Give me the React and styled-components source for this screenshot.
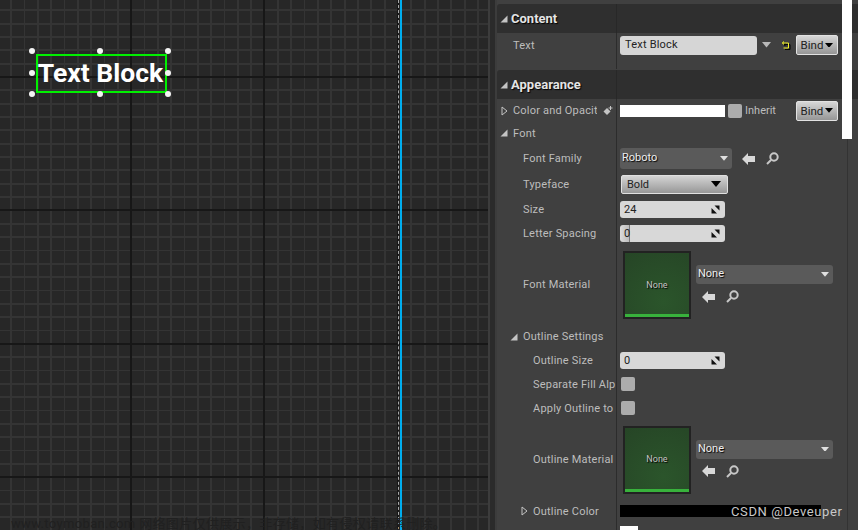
import React from "react";
import styled, { createGlobalStyle } from "styled-components";

const GlobalStyle = createGlobalStyle`
    html, body { margin: 0; padding: 0; background: #404040; }
    body { font-family: Roboto, "Noto Sans CJK SC", sans-serif; }
`;

const Page = styled.div`
    position: relative;
    display: flex;
    width: 858px;
    height: 530px;
    overflow: hidden;
`;

const Canvas = styled.div`
    position: relative;
    flex: 0 0 488px;
    background-color: #272727;
    background-image:
        repeating-linear-gradient(90deg, transparent 0, transparent 130px, #171717 130px, #171717 132px, transparent 132px, transparent 133.4px),
        repeating-linear-gradient(180deg, transparent 0, transparent 76px, #171717 76px, #171717 78px, transparent 78px, transparent 133.4px),
        repeating-linear-gradient(90deg, transparent 0, transparent 10.2px, #343434 10.2px, #343434 12px, transparent 12px, transparent 13.34px),
        repeating-linear-gradient(180deg, transparent 0, transparent 9.4px, #343434 9.4px, #343434 11.2px, transparent 11.2px, transparent 13.34px);
`;

const Selection = styled.div`
    position: absolute;
    left: 36px;
    top: 54px;
    width: 125px;
    height: 33px;
    padding: 0 2px 2px 0;
    border: 2px solid #00f000;
    display: flex;
    align-items: center;
    justify-content: center;
`;

const PreviewText = styled.span`
    color: #fff;
    font-size: 26.5px;
    font-weight: 700;
    white-space: nowrap;
`;

const Handle = styled.i`
    position: absolute;
    left: ${p => p.$x - 3}px;
    top: ${p => p.$y - 3}px;
    width: 6px;
    height: 6px;
    border-radius: 50%;
    background: #f4f4f4;
`;

const Guide = styled.div`
    position: absolute;
    left: 398px;
    top: 0;
    bottom: 0;
    width: 3px;
    border-left: 1px dashed #a8a8a8;
    &::after {
        content: "";
        display: block;
        width: 2px;
        height: 100%;
        margin-left: 1px;
        background: #00aeef;
    }
`;

const Gutter = styled.div`
    flex: 0 0 9px;
    box-sizing: border-box;
    background: #2b2b2b;
    border-left: 2px solid #3c3c3c;
    border-right: 2px solid #3c3c3c;
`;

const Panel = styled.div`
    flex: 1;
    padding-top: 4px;
    background: #404040;
`;

const Section = styled.div`
    padding-bottom: ${p => p.$pad || 0}px;
`;

const Header = styled.div`
    display: grid;
    grid-template-columns: 120px 1fr;
    height: 29px;
    background: #2f2f2f;
    border-radius: 3px 0 0 0;
`;

const HeaderTitle = styled.div`
    display: flex;
    align-items: center;
    gap: 3px;
    padding-left: 3px;
    border-right: 1px solid #282828;
    color: #e4e4e4;
    font-size: 13px;
    font-weight: 700;
    text-shadow: 1px 1px 1px #000;
`;

const Row = styled.div`
    display: grid;
    grid-template-columns: 120px 1fr;
    height: ${p => p.$h || 24}px;
`;

const Label = styled.div`
    display: flex;
    align-items: center;
    padding-left: ${p => p.$indent || 0}px;
    padding-bottom: ${p => p.$pb || 0}px;
    border-right: 1px solid #2c2c2c;
    color: #bdbdbd;
    font-size: 11px;
    letter-spacing: 0.2px;
    white-space: nowrap;
    overflow: hidden;
`;

const Twist = styled.span`
    flex: 0 0 ${p => p.$w || 13}px;
    display: flex;
    align-items: center;
`;

const KeySlot = styled.span`
    flex: 0 0 16px;
    display: flex;
    align-items: center;
    justify-content: flex-end;
`;

const Clip = styled.span`
    display: block;
    overflow: hidden;
    width: ${p => p.$w}px;
`;

const Value = styled.div`
    display: flex;
    align-items: center;
    padding-left: ${p => p.$left ?? 3}px;
    padding-bottom: ${p => p.$pb || 0}px;
    min-width: 0;
`;

const PeekValue = styled.div`
    padding: 3px 0 0 3px;
`;

const TextInput = styled.div`
    width: 137px;
    height: 19px;
    padding: 0 0 2px 5px;
    box-sizing: border-box;
    display: flex;
    align-items: center;
    border-radius: 3px;
    background: #d6d6d6;
    color: #222;
    font-size: 11px;
    letter-spacing: 0.2px;
`;

const NumberInput = styled.div`
    width: 105px;
    height: 17px;
    padding: 0 5px 0 4px;
    box-sizing: border-box;
    display: flex;
    align-items: center;
    justify-content: space-between;
    border-radius: 3px;
    background: ${p => p.$cursor
        ? "linear-gradient(90deg, #dcdcdc 0, #bcbcbc 9px, #777 9px, #777 10px, #d8d8d8 10px)"
        : "#d8d8d8"};
    color: #222;
    font-size: 11px;
`;

const BindButton = styled.div`
    width: 42px;
    height: 20px;
    box-sizing: border-box;
    margin-left: ${p => p.$ml}px;
    display: flex;
    align-items: center;
    justify-content: center;
    gap: 2px;
    border: 1px solid #e2e2e2;
    border-radius: 2px;
    background: linear-gradient(#d6d6d6, #969696);
    color: #222;
    font-size: 11.5px;
`;

const Swatch = styled.div`
    width: ${p => p.$w}px;
    height: 12px;
    background: ${p => p.$c};
`;

const Check = styled.div`
    flex: 0 0 14px;
    height: 14px;
    margin-left: ${p => p.$ml || 0}px;
    border-radius: 2px;
    background: #acacac;
`;

const Inherit = styled.span`
    margin-left: 3px;
    color: #bdbdbd;
    font-size: 11px;
`;

const Combo = styled.div`
    width: ${p => p.$w}px;
    height: ${p => p.$h || 19}px;
    padding: 0 4px 0 2px;
    box-sizing: border-box;
    display: flex;
    align-items: center;
    justify-content: space-between;
    border-radius: 3px;
    background: #5a5a5a;
    color: #eee;
    font-size: 11px;
    text-shadow: 1px 1px 1px #000;
    span { margin-top: -2px; }
`;

const TypefaceCombo = styled.div`
    width: 107px;
    height: 19px;
    margin-left: 1px;
    padding: 0 6px 0 5px;
    box-sizing: border-box;
    display: flex;
    align-items: center;
    justify-content: space-between;
    border: 1px solid #e0e0e0;
    border-radius: 2px;
    background: linear-gradient(#d4d4d4, #979797);
    color: #222;
    font-size: 11px;
`;

const Thumb = styled.div`
    flex: 0 0 64px;
    height: 64px;
    margin: 0 7px 0 8px;
    padding-top: 2px;
    box-sizing: border-box;
    border-bottom: 3px solid #38b23c;
    display: flex;
    align-items: center;
    justify-content: center;
    background: radial-gradient(circle at 60% 80%, #2b552b, #264526);
    box-shadow: 0 0 0 2px #222;
    color: #c4c4c4;
    font-size: 9px;
    text-shadow: 1px 1px 1px #000;
`;

const AssetStack = styled.div`
    display: flex;
    flex-direction: column;
    gap: 6px;
    padding-bottom: 2px;
`;

const ToolIcons = styled.div`
    display: flex;
    align-items: center;
    gap: ${p => p.$gap || 10}px;
    margin-left: ${p => p.$ml || 0}px;
`;

const Scrollbar = styled.div`
    position: absolute;
    left: 842px;
    top: 0;
    width: 10px;
    height: 139px;
    background: #fff;
`;

const Track = styled.div`
    position: absolute;
    left: 847px;
    top: 139px;
    bottom: 0;
    width: 1px;
    background: #333;
`;

const Credit = styled.div`
    position: absolute;
    left: 731px;
    top: 504px;
    color: #c8c8c8;
    font-size: 13px;
    letter-spacing: 0.6px;
    white-space: nowrap;
`;

const Watermark = styled.div`
    position: absolute;
    left: 11px;
    top: 513px;
    color: #202020;
    font-size: 13px;
    letter-spacing: 0.35px;
    white-space: nowrap;
`;

const Open = () => (
    <svg width="8" height="8" viewBox="0 0 8 8"><path d="M7.5 0.5v7h-7z" fill="#c4c4c4" /></svg>
);
const Closed = () => (
    <svg width="7" height="10" viewBox="0 0 7 10"><path d="M1 1l5 4-5 4z" fill="none" stroke="#c4c4c4" /></svg>
);
const Down = ({ c = "#000", w = 8 }) => (
    <svg width={w} height={w * 0.6} viewBox="0 0 10 6"><path d="M0 0h10L5 6z" fill={c} /></svg>
);
const Back = () => (
    <svg width="13" height="12" viewBox="0 0 13 12"><path d="M0 6l6-6v3h7v6H6v3z" fill="#d8d8d8" /></svg>
);
const Search = () => (
    <svg width="13" height="13" viewBox="0 0 13 13" fill="none" stroke="#c8c8c8" strokeWidth="2"><circle cx="8" cy="5" r="3.7" /><path d="M5 8l-4 4" /></svg>
);
const Spin = () => (
    <svg width="9" height="9" viewBox="0 0 9 9"><path d="M3.5 0.5h5v5zM0.5 3v5.5H6z" fill="#111" /></svg>
);
const Reset = () => (
    <svg width="10" height="9" viewBox="0 0 10 9" fill="none">
        <path d="M3.5 1.5L2 3l1.5 1.5M2 3h6v5H3" stroke="#000" transform="translate(1 .6)" />
        <path d="M3 .5L1.3 2 3 3.5M1.5 2h6v5H2.5" stroke="#f4f428" />
    </svg>
);
const AddKey = () => (
    <svg width="10" height="10" viewBox="0 0 10 10"><path d="M4 2l3.5 3.5L4 9 .5 5.5z" fill="#c4c4c4" /><path d="M7.5 0v4M5.5 2h4" stroke="#c4c4c4" /></svg>
);

const handles = [[32, 51], [100, 51], [168, 51], [32, 73], [168, 73], [32, 94], [100, 94], [168, 94]];

const AssetPicker = () => (
    <Value $left={0}>
        <Thumb>None</Thumb>
        <AssetStack>
            <Combo $w={137}><span>None</span><Down c="#e0e0e0" /></Combo>
            <ToolIcons $gap={11} $ml={6}><Back /><Search /></ToolIcons>
        </AssetStack>
    </Value>
);

const App = () => (
    <Page>
        <GlobalStyle />
        <Canvas>
            <Selection><PreviewText>Text Block</PreviewText></Selection>
            {handles.map(([x, y]) => <Handle key={x + "-" + y} $x={x} $y={y} />)}
            <Guide />
        </Canvas>
        <Gutter />
        <Panel>
            <Section $pad={1}>
                <Header>
                    <HeaderTitle><Open />Content</HeaderTitle>
                    <div />
                </Header>
                <Row $h={36}>
                    <Label $indent={16} $pb={12}>Text</Label>
                    <Value $pb={12}>
                        <TextInput>Text Block</TextInput>
                        <ToolIcons $gap={10} $ml={5}><Down c="#b8b8b8" w={9} /><Reset /></ToolIcons>
                        <BindButton $ml={5}>Bind<Down /></BindButton>
                    </Value>
                </Row>
            </Section>
            <Section>
                <Header>
                    <HeaderTitle><Open />Appearance</HeaderTitle>
                    <div />
                </Header>
                <Row $h={23}>
                    <Label $indent={4}>
                        <Twist $w={12}><Closed /></Twist>
                        <Clip $w={84}>Color and Opacit</Clip>
                        <KeySlot><AddKey /></KeySlot>
                    </Label>
                    <Value>
                        <Swatch $w={105} $c="#fff" />
                        <Check $ml={3} />
                        <Inherit>Inherit</Inherit>
                        <BindButton $ml={20}>Bind<Down /></BindButton>
                    </Value>
                </Row>
                <Row>
                    <Label $indent={3} $pb={2}><Twist><Open /></Twist>Font</Label>
                </Row>
                <Row $h={25}>
                    <Label $indent={26}>Font Family</Label>
                    <Value>
                        <Combo $w={112} $h={21}><span>Roboto</span><Down c="#e0e0e0" /></Combo>
                        <ToolIcons $gap={11} $ml={10}><Back /><Search /></ToolIcons>
                    </Value>
                </Row>
                <Row $h={26}>
                    <Label $indent={26}>Typeface</Label>
                    <Value><TypefaceCombo>Bold<Down w={10} /></TypefaceCombo></Value>
                </Row>
                <Row>
                    <Label $indent={26}>Size</Label>
                    <Value><NumberInput><span>24</span><Spin /></NumberInput></Value>
                </Row>
                <Row>
                    <Label $indent={26}>Letter Spacing</Label>
                    <Value><NumberInput $cursor><span>0</span><Spin /></NumberInput></Value>
                </Row>
                <Row $h={80}>
                    <Label $indent={26} $pb={2}>Font Material</Label>
                    <AssetPicker />
                </Row>
                <Row $h={23}>
                    <Label $indent={13}><Twist><Open /></Twist>Outline Settings</Label>
                </Row>
                <Row>
                    <Label $indent={36}>Outline Size</Label>
                    <Value><NumberInput><span>0</span><Spin /></NumberInput></Value>
                </Row>
                <Row>
                    <Label $indent={36}>Separate Fill Alp</Label>
                    <Value $left={4}><Check /></Value>
                </Row>
                <Row>
                    <Label $indent={36}>Apply Outline to</Label>
                    <Value $left={4}><Check /></Value>
                </Row>
                <Row $h={79}>
                    <Label $indent={36}>Outline Material</Label>
                    <AssetPicker />
                </Row>
                <Row>
                    <Label $indent={24}><Twist $w={12}><Closed /></Twist>Outline Color</Label>
                    <Value><Swatch $w={201} $c="#000" /></Value>
                </Row>
                <Row $h={7}>
                    <Label />
                    <PeekValue><Swatch $w={18} $c="#fff" /></PeekValue>
                </Row>
            </Section>
        </Panel>
        <Scrollbar />
        <Track />
        <Watermark>www.toymoban.com 网络图片仅供展示，非存储，如有侵权请联系删除。</Watermark>
        <Credit>CSDN @Deveuper</Credit>
    </Page>
);

export default App;
